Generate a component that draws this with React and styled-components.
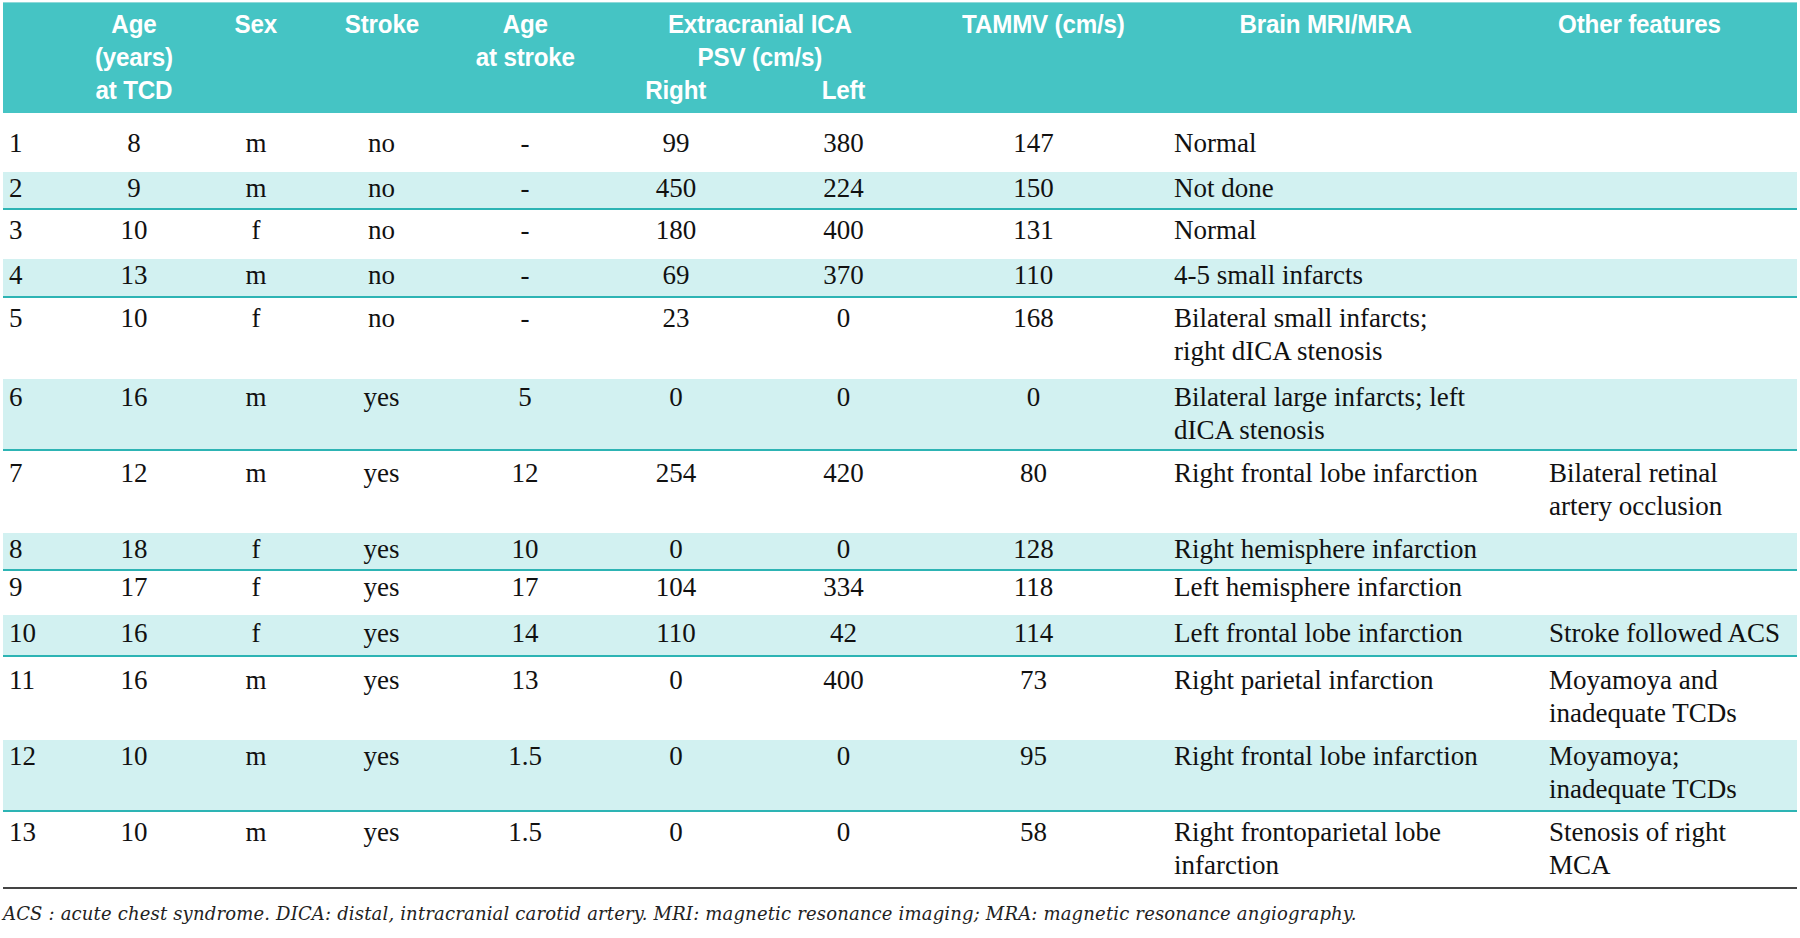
import styled, { createGlobalStyle } from 'styled-components'

const GlobalStyle = createGlobalStyle`
  html, body { margin: 0; padding: 0; background: #fff; }
  body { width: 1800px; height: 938px; overflow: hidden; }
`

// column widths, shared by header and body rows
const COLS = '87px 88px 156px 95px 192px 110px 225px 155px 429px 257px'

const Page = styled.div`
  width: 1794px;
  padding: 2px 3px 0 3px;
`

const Head = styled.div`
  display: grid;
  grid-template-columns: ${COLS};
  grid-template-rows: 66px 33px;
  box-sizing: border-box;
  height: 111px;
  padding-top: 5px;
  border-top: 1px solid #8fd9d9;
  background: #45c4c4;
  color: #fff;
  font-family: "Liberation Sans", Arial, sans-serif;
  font-weight: 700;
  font-size: 26px;
  letter-spacing: -0.2px;
  line-height: 33px;
`

const HeadCell = styled.div`
  grid-column: ${p => p.col};
  grid-row: ${p => p.row || '1 / span 2'};
  text-align: center;
  padding-right: ${p => p.shift || 0}px;
  white-space: nowrap;
`

// no condensed bold face installed: squeeze the regular bold one
const Label = styled.span`
  display: inline-block;
  transform: scaleX(0.93);
`

const Row = styled.div`
  display: grid;
  grid-template-columns: ${COLS};
  box-sizing: border-box;
  height: ${p => p.h}px;
  padding-top: ${p => p.pt}px;
  background: ${p => (p.band ? '#d2f1f1' : '#fff')};
  border-bottom: ${p => (p.band ? '2px solid #2db4b4' : p.last ? '2px solid #444' : 'none')};
  color: #111;
  font-family: "Liberation Serif", serif;
  font-size: 27px;
  line-height: 33px;
`

const Cell = styled.div`
  text-align: ${p => p.align || 'center'};
  padding-left: ${p => p.indent || 0}px;
  white-space: nowrap;
`

const Note = styled.p`
  margin: 14px 0 0 0;
  color: #222;
  font-family: "DejaVu Serif", "Liberation Serif", serif;
  font-style: italic;
  font-size: 18px;
  letter-spacing: 0.17px;
  line-height: 22px;
  white-space: nowrap;
`

const rows = [
  { h: 59, pt: 14, d: ['1', '8', 'm', 'no', '-', '99', '380', '147'], brain: ['Normal'], other: [] },
  { h: 38, pt: 0, d: ['2', '9', 'm', 'no', '-', '450', '224', '150'], brain: ['Not done'], other: [] },
  { h: 49, pt: 4, d: ['3', '10', 'f', 'no', '-', '180', '400', '131'], brain: ['Normal'], other: [] },
  { h: 39, pt: 0, d: ['4', '13', 'm', 'no', '-', '69', '370', '110'], brain: ['4-5 small infarcts'], other: [] },
  { h: 81, pt: 4, d: ['5', '10', 'f', 'no', '-', '23', '0', '168'], brain: ['Bilateral small infarcts;', 'right dICA stenosis'], other: [] },
  { h: 72, pt: 2, d: ['6', '16', 'm', 'yes', '5', '0', '0', '0'], brain: ['Bilateral large infarcts; left', 'dICA stenosis'], other: [] },
  { h: 82, pt: 6, d: ['7', '12', 'm', 'yes', '12', '254', '420', '80'], brain: ['Right frontal lobe infarction'], other: ['Bilateral retinal', 'artery occlusion'] },
  { h: 38, pt: 0, d: ['8', '18', 'f', 'yes', '10', '0', '0', '128'], brain: ['Right hemisphere infarction'], other: [] },
  { h: 44, pt: 0, d: ['9', '17', 'f', 'yes', '17', '104', '334', '118'], brain: ['Left hemisphere infarction'], other: [] },
  { h: 42, pt: 2, d: ['10', '16', 'f', 'yes', '14', '110', '42', '114'], brain: ['Left frontal lobe infarction'], other: ['Stroke followed ACS'] },
  { h: 83, pt: 7, d: ['11', '16', 'm', 'yes', '13', '0', '400', '73'], brain: ['Right parietal infarction'], other: ['Moyamoya and', 'inadequate TCDs'] },
  { h: 72, pt: 0, d: ['12', '10', 'm', 'yes', '1.5', '0', '0', '95'], brain: ['Right frontal lobe infarction'], other: ['Moyamoya;', 'inadequate TCDs'] },
  { h: 77, pt: 4, d: ['13', '10', 'm', 'yes', '1.5', '0', '0', '58'], brain: ['Right frontoparietal lobe', 'infarction'], other: ['Stenosis of right', 'MCA'] },
]

const Lines = ({ items }) =>
  items.map((t, i) => (
    <span key={i}>
      {i > 0 && <br />}
      {t}
    </span>
  ))

const App = () => {
  return (
    <Page>
      <GlobalStyle />
      <Head>
        <HeadCell col={2}><Label>Age<br />(years)<br />at TCD</Label></HeadCell>
        <HeadCell col={3}><Label>Sex</Label></HeadCell>
        <HeadCell col={4}><Label>Stroke</Label></HeadCell>
        <HeadCell col={5}><Label>Age<br />at stroke</Label></HeadCell>
        <HeadCell col="6 / span 2" row={1} shift={57}><Label>Extracranial ICA<br />PSV (cm/s)</Label></HeadCell>
        <HeadCell col={6} row={2}><Label>Right</Label></HeadCell>
        <HeadCell col={7} row={2}><Label>Left</Label></HeadCell>
        <HeadCell col={8} shift={18}><Label>TAMMV (cm/s)</Label></HeadCell>
        <HeadCell col={9}><Label>Brain MRI/MRA</Label></HeadCell>
        <HeadCell col={10} shift={59}><Label>Other features</Label></HeadCell>
      </Head>
      {rows.map((r, i) => (
        <Row key={i} h={r.h} pt={r.pt} band={i % 2 === 1} last={i === rows.length - 1}>
          <Cell align="left" indent={6}>{r.d[0]}</Cell>
          {r.d.slice(1).map((v, j) => (
            <Cell key={j}>{v}</Cell>
          ))}
          <Cell align="left" indent={63}><Lines items={r.brain} /></Cell>
          <Cell align="left" indent={9}><Lines items={r.other} /></Cell>
        </Row>
      ))}
      <Note>
        ACS : acute chest syndrome. DICA: distal, intracranial carotid artery. MRI: magnetic resonance imaging; MRA: magnetic resonance angiography.
      </Note>
    </Page>
  )
}

export default App
